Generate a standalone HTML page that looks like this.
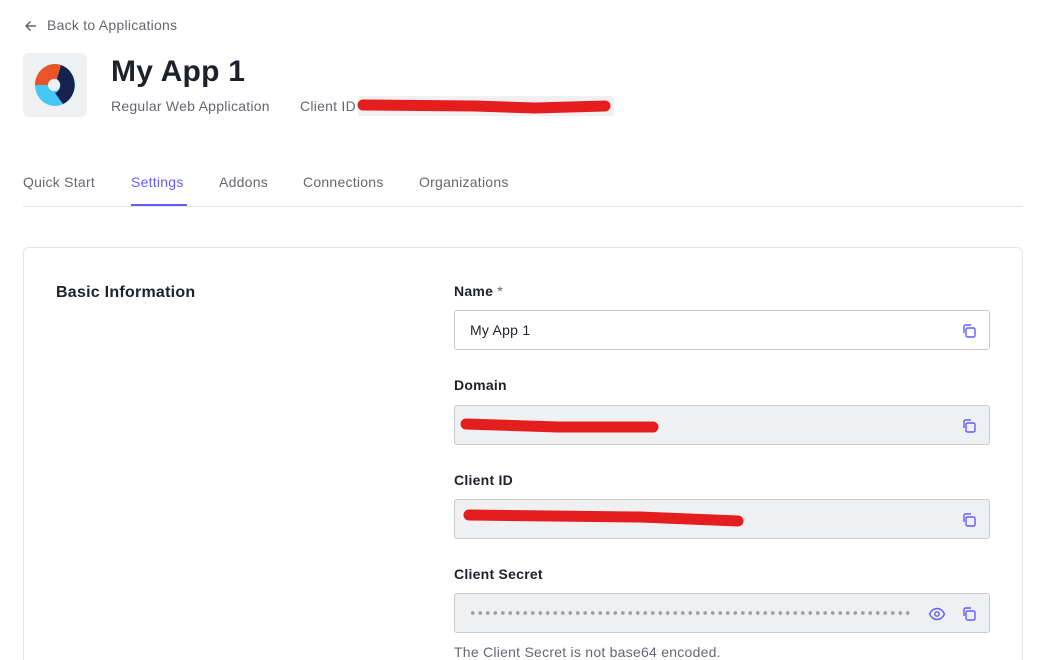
<!DOCTYPE html>
<html><head><meta charset="utf-8"><style>
*{box-sizing:border-box;margin:0;padding:0}
html,body{width:1041px;height:660px;overflow:hidden}
body{background:#fff;font-family:"Liberation Sans",sans-serif;color:#1e212a;position:relative;letter-spacing:0.25px}
.a{position:absolute}
.back{left:47px;top:17px;font-size:14px;color:#65676e}
.logo{left:23px;top:53px;width:64px;height:64px;background:#eff0f2;border-radius:6px}
h1{position:absolute;left:111px;top:55px;font-size:30px;font-weight:bold;color:#1e212a}
.sub{top:98px;font-size:14px;color:#65676e}
.tabs{top:174px;font-size:14px;color:#65676e}
.line{left:23px;top:206px;width:1000px;height:1px;background:#e3e4e6}
.card{left:23px;top:247px;width:1000px;height:460px;border:1px solid #e3e4e6;border-radius:6px}
.lbl{left:454px;font-size:14px;font-weight:bold;color:#1e212a}
.in{left:454px;width:536px;height:40px;border:1px solid #c9cace;border-radius:3px;background:#eff0f2}
.cp{position:absolute;right:12px;top:12px}
</style></head><body>
<svg class="a" style="left:23px;top:18px" width="16" height="16" viewBox="0 0 16 16"><path d="M13 8H3M7.5 3.5L3 8l4.5 4.5" stroke="#65676e" stroke-width="1.5" fill="none"/></svg>
<div class="a back">Back to Applications</div>
<div class="a logo"><svg width="64" height="64" viewBox="0 0 64 64"><ellipse cx="32" cy="32" rx="20" ry="21" fill="#44c7f4"/><path d="M12 32A20 21 0 0 1 38 12L34 26A6 6 0 0 0 26 32Z" fill="#eb5424"/><path d="M38 12A20 21 0 0 1 40 51L32 40A8 8 0 0 0 34 26Z" fill="#16214d"/><circle cx="31" cy="32" r="6" fill="#eff0f2"/></svg></div>
<h1>My App 1</h1>
<div class="a sub" style="left:111px">Regular Web Application</div>
<div class="a sub" style="left:300px">Client ID</div>
<div class="a" style="left:358px;top:96px;width:256px;height:20px;background:#f0f0f2;border-radius:3px"></div>
<svg class="a" style="left:355px;top:95px" width="262" height="22"><path d="M8 10 L120 11 L180 13 L250 11" stroke="#e41e1e" stroke-width="11" stroke-linecap="round" fill="none"/></svg>
<div class="a tabs" style="left:23px">Quick Start</div>
<div class="a tabs" style="left:131px;color:#635dff">Settings</div>
<div class="a tabs" style="left:219px">Addons</div>
<div class="a tabs" style="left:303px">Connections</div>
<div class="a tabs" style="left:419px">Organizations</div>
<div class="a line"></div>
<div class="a" style="left:131px;top:204px;width:56px;height:2px;background:#635dff"></div>
<div class="a card"></div>
<div class="a" style="left:56px;top:284px;font-size:16px;font-weight:bold">Basic Information</div>
<div class="a lbl" style="top:283px">Name <span style="color:#65676e;font-weight:normal">*</span></div>
<div class="a in" style="top:310px;background:#fff"><span class="a" style="left:15px;top:11px;font-size:14px">My App 1</span><svg class="cp" width="16" height="16" viewBox="0 0 16 16"><rect x="5" y="5" width="9" height="9" rx="1.5" stroke="#635dff" stroke-width="1.4" fill="none"/><path d="M3 10V3.5A1.5 1.5 0 0 1 4.5 2H10" stroke="#635dff" stroke-width="1.4" fill="none"/></svg></div>
<div class="a lbl" style="top:377px">Domain</div>
<div class="a in" style="top:405px"><svg class="cp" width="16" height="16" viewBox="0 0 16 16"><rect x="5" y="5" width="9" height="9" rx="1.5" stroke="#635dff" stroke-width="1.4" fill="none"/><path d="M3 10V3.5A1.5 1.5 0 0 1 4.5 2H10" stroke="#635dff" stroke-width="1.4" fill="none"/></svg></div>
<svg class="a" style="left:458px;top:412px" width="210" height="28"><path d="M8 12 L100 15 L195 15" stroke="#e41e1e" stroke-width="11" stroke-linecap="round" fill="none"/></svg>
<div class="a lbl" style="top:472px">Client ID</div>
<div class="a in" style="top:499px"><svg class="cp" width="16" height="16" viewBox="0 0 16 16"><rect x="5" y="5" width="9" height="9" rx="1.5" stroke="#635dff" stroke-width="1.4" fill="none"/><path d="M3 10V3.5A1.5 1.5 0 0 1 4.5 2H10" stroke="#635dff" stroke-width="1.4" fill="none"/></svg></div>
<svg class="a" style="left:460px;top:506px" width="290" height="28"><path d="M9 9 L180 11 L278 15" stroke="#e41e1e" stroke-width="11" stroke-linecap="round" fill="none"/></svg>
<div class="a lbl" style="top:566px">Client Secret</div>
<div class="a in" style="top:593px"><div class="a" style="left:14px;top:16px;width:444px;height:6px;background:radial-gradient(circle,#a0a2a8 1.7px,transparent 2.1px) 0 0/7.5px 6px"></div><svg class="a" style="left:473px;top:12px" width="18" height="16" viewBox="0 0 18 16"><path d="M1.5 8C3.5 4 6 2.5 9 2.5S14.5 4 16.5 8C14.5 12 12 13.5 9 13.5S3.5 12 1.5 8Z" stroke="#635dff" stroke-width="1.4" fill="none"/><circle cx="9" cy="8" r="2.2" stroke="#635dff" stroke-width="1.4" fill="none"/></svg><svg class="cp" width="16" height="16" viewBox="0 0 16 16"><rect x="5" y="5" width="9" height="9" rx="1.5" stroke="#635dff" stroke-width="1.4" fill="none"/><path d="M3 10V3.5A1.5 1.5 0 0 1 4.5 2H10" stroke="#635dff" stroke-width="1.4" fill="none"/></svg></div>
<div class="a" style="left:454px;top:644px;font-size:14px;color:#65676e">The Client Secret is not base64 encoded.</div>
</body></html>
